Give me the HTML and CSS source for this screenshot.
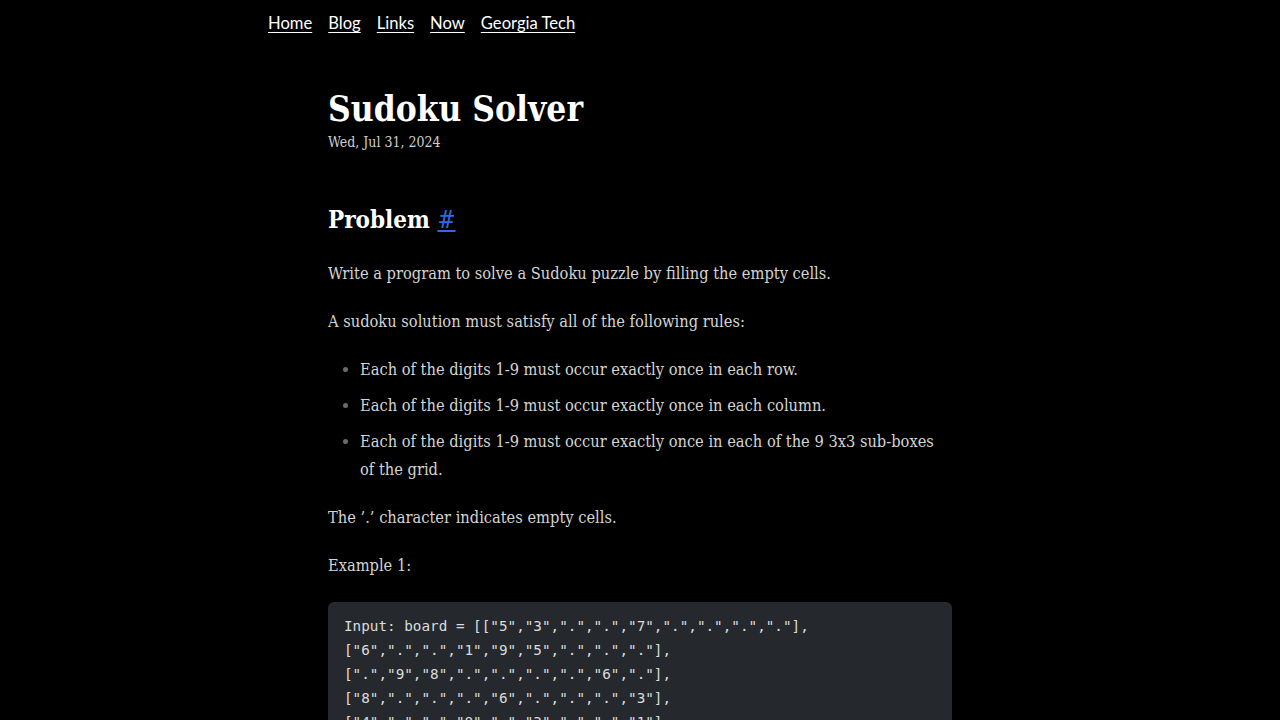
FILE: index.html
```html
<!DOCTYPE html>
<html>
<head>
<meta charset="utf-8">
<title>Sudoku Solver</title>
<link rel="stylesheet" href="styles.css">
</head>
<body>
<nav class="nav">
  <a href="#">Home</a>
  <a href="#">Blog</a>
  <a href="#">Links</a>
  <a href="#">Now</a>
  <a href="#">Georgia Tech</a>
</nav>
<main class="post">
  <header class="post-head">
    <h1 class="title">Sudoku Solver</h1>
    <div class="date">Wed, Jul 31, 2024</div>
  </header>
  <h2 class="section">Problem <a class="anchor" href="#">#</a></h2>
  <p>Write a program to solve a Sudoku puzzle by filling the empty cells.</p>
  <p>A sudoku solution must satisfy all of the following rules:</p>
  <ul class="rules">
    <li>Each of the digits 1-9 must occur exactly once in each row.</li>
    <li>Each of the digits 1-9 must occur exactly once in each column.</li>
    <li>Each of the digits 1-9 must occur exactly once in each of the 9 3x3 sub-boxes of the grid.</li>
  </ul>
  <p>The ’.’ character indicates empty cells.</p>
  <p>Example 1:</p>
  <pre class="code">Input: board = [["5","3",".",".","7",".",".",".","."],
["6",".",".","1","9","5",".",".","."],
[".","9","8",".",".",".",".","6","."],
["8",".",".",".","6",".",".",".","3"],
["4",".",".","8",".","3",".",".","1"],
["7",".",".",".","2",".",".",".","6"],
[".","6",".",".",".",".","2","8","."],
[".",".",".","4","1","9",".",".","5"],
[".",".",".",".","8",".",".","7","9"]]</pre>
</main>
</body>
</html>
```
FILE: styles.css
```css
html, body {
  margin: 0;
  padding: 0;
  background: #000;
}
body {
  color: #d4d4d4;
  font-family: "DejaVu Serif Condensed", "DejaVu Serif", serif;
  font-stretch: condensed;
  font-size: 16.3px;
  line-height: 28px;
}
.nav {
  width: 744px;
  margin: 0 auto;
  padding-top: 11px;
  display: flex;
  gap: 16px;
  font-family: "Lato", "Open Sans", sans-serif;
  font-stretch: normal;
  font-size: 16.6px;
  line-height: 24px;
}
.nav a {
  color: #fff;
  text-decoration: underline;
  text-underline-offset: 3px;
}
.post {
  width: 624px;
  margin: 0 auto;
  padding-top: 51px;
}
.post-head {
  margin-bottom: 51px;
}
.title {
  margin: 0;
  font-size: 35px;
  line-height: 46px;
  font-weight: 700;
  color: #fff;
}
.date {
  font-size: 14px;
  line-height: 20px;
  color: #cfcfcf;
}
.section {
  margin: 0 0 23px;
  font-size: 24px;
  line-height: 34px;
  color: #fff;
}
.anchor {
  color: #2f6ae6;
  font-weight: 400;
}
p {
  margin: 0 0 20px;
}
.rules {
  margin: 0 0 20px;
  padding-left: 32px;
}
.rules li {
  margin-bottom: 8px;
}
.rules li::marker {
  color: #6b6b6b;
}
.code {
  margin: 22px 0 0;
  background: #25292d;
  border-radius: 6px;
  padding: 12px 16px;
  font-family: "DejaVu Sans Mono", monospace;
  font-stretch: normal;
  font-size: 14.3px;
  line-height: 24px;
  color: #dcdcdc;
}
```
